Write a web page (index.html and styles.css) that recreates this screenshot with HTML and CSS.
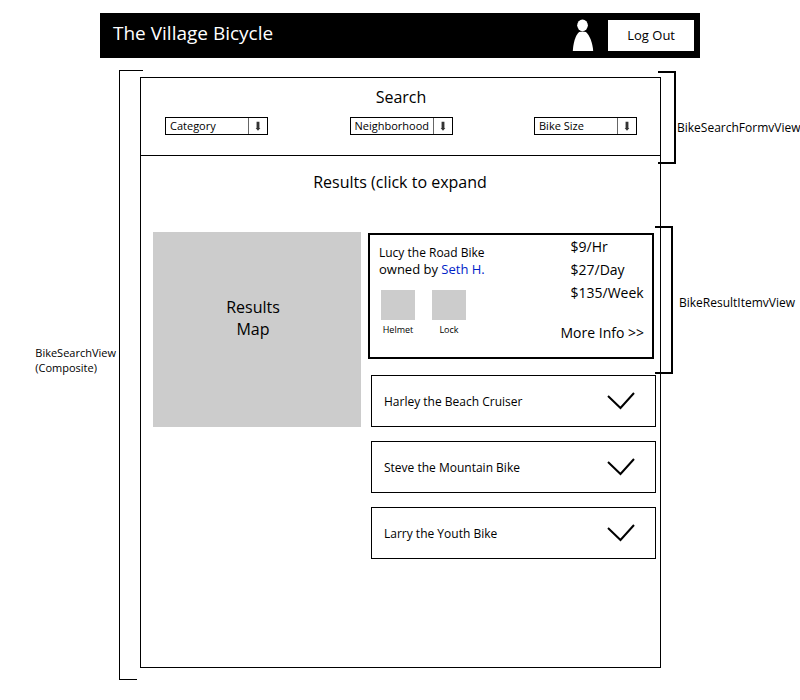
FILE: index.html
```
<!DOCTYPE html>
<html lang="en">
<head>
<meta charset="utf-8">
<title>The Village Bicycle</title>
<link rel="stylesheet" href="styles.css">
</head>
<body>
<header class="topbar">
  <h1 class="brand">The Village Bicycle</h1>
  <svg class="person" viewBox="0 0 22 34" aria-hidden="true"><ellipse cx="10.500" cy="6.500" rx="5.500" ry="6"/><path d="M7 13.500C9 12.700 12 12.700 14 13.500C18 17 21 25 21.500 33H.5C1 25 3 17 7 13.500Z"/></svg>
  <button class="logout" type="button">Log Out</button>
</header>
<div class="workspace">
  <aside class="composite">
    <p class="note">BikeSearchView<br>(Composite)</p>
    <div class="bracket-left"></div>
  </aside>
  <main class="panel">
    <section class="search">
      <h2 class="title">Search</h2>
      <form class="filters">
        <div class="picker">
          <select aria-label="Category"><option>Category</option></select>
          <svg class="arrow" viewBox="0 0 19 16" aria-hidden="true"><path d="M8 3.500H11V10H12L9.500 13L7 10H8Z"/></svg>
        </div>
        <div class="picker">
          <select aria-label="Neighborhood"><option>Neighborhood</option></select>
          <svg class="arrow" viewBox="0 0 19 16" aria-hidden="true"><path d="M8 3.500H11V10H12L9.500 13L7 10H8Z"/></svg>
        </div>
        <div class="picker">
          <select aria-label="Bike Size"><option>Bike Size</option></select>
          <svg class="arrow" viewBox="0 0 19 16" aria-hidden="true"><path d="M8 3.500H11V10H12L9.500 13L7 10H8Z"/></svg>
        </div>
      </form>
      <div class="bracket bracket-search"><span class="note">BikeSearchFormvView</span></div>
    </section>
    <section class="results">
      <h2 class="title">Results (click to expand</h2>
      <div class="columns">
        <div class="map">Results<br>Map</div>
        <div class="list">
          <article class="featured">
            <div class="details">
              <h3 class="bike">Lucy the Road Bike</h3>
              <p class="owner">owned by <a href="#owner">Seth H.</a></p>
              <div class="extras">
                <figure><div class="thumb"></div><figcaption>Helmet</figcaption></figure>
                <figure><div class="thumb"></div><figcaption>Lock</figcaption></figure>
              </div>
            </div>
            <div class="offer">
              <ul class="prices">
                <li>$9/Hr</li>
                <li>$27/Day</li>
                <li>$135/Week</li>
              </ul>
              <a class="more" href="#more">More Info &gt;&gt;</a>
            </div>
            <div class="bracket bracket-result"><span class="note">BikeResultItemvView</span></div>
          </article>
          <button class="item" type="button">Harley the Beach Cruiser<svg class="chevron" viewBox="0 0 28 18" aria-hidden="true"><path d="M1 4L13.500 16L27 1"/></svg></button>
          <button class="item" type="button">Steve the Mountain Bike<svg class="chevron" viewBox="0 0 28 18" aria-hidden="true"><path d="M1 4L13.500 16L27 1"/></svg></button>
          <button class="item" type="button">Larry the Youth Bike<svg class="chevron" viewBox="0 0 28 18" aria-hidden="true"><path d="M1 4L13.500 16L27 1"/></svg></button>
        </div>
      </div>
    </section>
  </main>
</div>
</body>
</html>
```
FILE: styles.css
```
* { box-sizing: border-box; }
body {
  margin: 0;
  min-height: 100vh;
  display: flex;
  flex-direction: column;
  background: #fff;
  color: #000;
  font-family: "Open Sans", "Noto Sans", sans-serif;
  font-size: 12px;
}
h1, h2, h3, p, ul, figure { margin: 0; padding: 0; font-weight: 400; }
ul { list-style: none; }
button, select { font-family: inherit; color: inherit; }

.topbar {
  display: flex;
  align-items: center;
  margin: 13px 12.5% 0;
  padding: 6px 6px 6px 13px;
  background: #000;
}
.brand { flex: 1; color: #fff; font-size: 19px; line-height: 26px; padding-bottom: 5px; }
.person { width: 22px; height: 33px; margin-right: 14px; fill: #fff; }
.logout {
  padding: 0 19px;
  border: 0;
  background: #fff;
  font-size: 13px;
  line-height: 31px;
}

.workspace {
  flex: 1;
  display: grid;
  grid-template-columns: 140px minmax(0, 1fr) 139px;
  margin: 12px 0 20px;
}
.composite {
  position: relative;
  display: flex;
  align-items: center;
  justify-content: flex-end;
  padding: 0 24px 30px 0;
}
.note { font-size: 11px; line-height: 15px; }
.bracket-left {
  position: absolute;
  top: 0;
  bottom: 0;
  left: 119px;
  width: 18px;
  border: solid #000;
  border-width: 0 0 1px 1px;
}
.bracket-left::before {
  content: "";
  position: absolute;
  top: 0;
  left: 0;
  width: 23px;
  border-top: 1px solid #000;
}
.panel { margin: 7px 0 12px; border: 1px solid #000; }
.title { font-size: 16px; line-height: 24px; text-align: center; }

.search { position: relative; padding: 7px 23px 20px 24px; border-bottom: 1px solid #000; }
.filters { display: flex; justify-content: space-between; margin-top: 8px; }
.picker { display: flex; width: 103px; height: 18px; border: 1px solid #000; }
.picker select {
  flex: 1;
  min-width: 0;
  appearance: none;
  border: 0;
  border-radius: 0;
  padding: 0 0 0 4px;
  background: #fff;
  font-size: 11px;
  line-height: 16px;
}
.arrow { width: 19px; height: 16px; border-left: 1px solid #666; fill: #333; }

.bracket {
  position: absolute;
  display: flex;
  align-items: center;
  width: 18px;
  border: 2px solid #000;
  border-left: 0;
}
.bracket .note { position: absolute; left: 100%; font-size: 12px; white-space: nowrap; }
.bracket-search { top: -7px; bottom: -9px; right: -16px; }
.bracket-search .note { padding: 20px 0 0 3px; }
.bracket-result { top: -9px; bottom: -17px; right: -21px; }
.bracket-result .note { padding: 5px 0 0 8px; }

.results { padding: 14px 4px 0 12px; }
.results .title { padding-right: 9px; }
.columns {
  display: grid;
  grid-template-columns: 208fr 288fr;
  gap: 7px;
  align-items: start;
  margin-top: 38px;
}
.map {
  display: flex;
  align-items: center;
  justify-content: center;
  min-height: 195px;
  padding: 0 8px 24px 0;
  background: #ccc;
  font-size: 16px;
  line-height: 22px;
  text-align: center;
}
.list { display: flex; flex-direction: column; gap: 14px; padding-top: 1px; }
.featured {
  position: relative;
  display: flex;
  justify-content: space-between;
  margin: 0 2px 2px 0;
  padding: 0 8px 14px 9px;
  border: 2px solid #000;
}
.details { padding: 10px 0 7px; }
.bike { font-size: 12px; line-height: 16px; }
.owner { font-size: 13px; line-height: 16px; }
a { color: #0023c8; text-decoration: none; }
.extras { display: flex; gap: 17px; margin: 13px 0 0 2px; }
.thumb { width: 34px; height: 30px; background: #ccc; }
figcaption { font-size: 9px; line-height: 12px; padding-top: 4px; text-align: center; }
.offer { display: flex; flex-direction: column; justify-content: space-between; }
.prices { padding-left: 10px; font-size: 14px; line-height: 23px; }
.more { color: #000; font-size: 14px; line-height: 20px; }
.item {
  display: flex;
  align-items: center;
  justify-content: space-between;
  min-height: 52px;
  margin-left: 3px;
  padding: 0 20px 0 12px;
  border: 1px solid #000;
  background: #fff;
  font-size: 12px;
  text-align: left;
}
.chevron { width: 28px; height: 18px; fill: none; stroke: #000; stroke-width: 2; }
```
